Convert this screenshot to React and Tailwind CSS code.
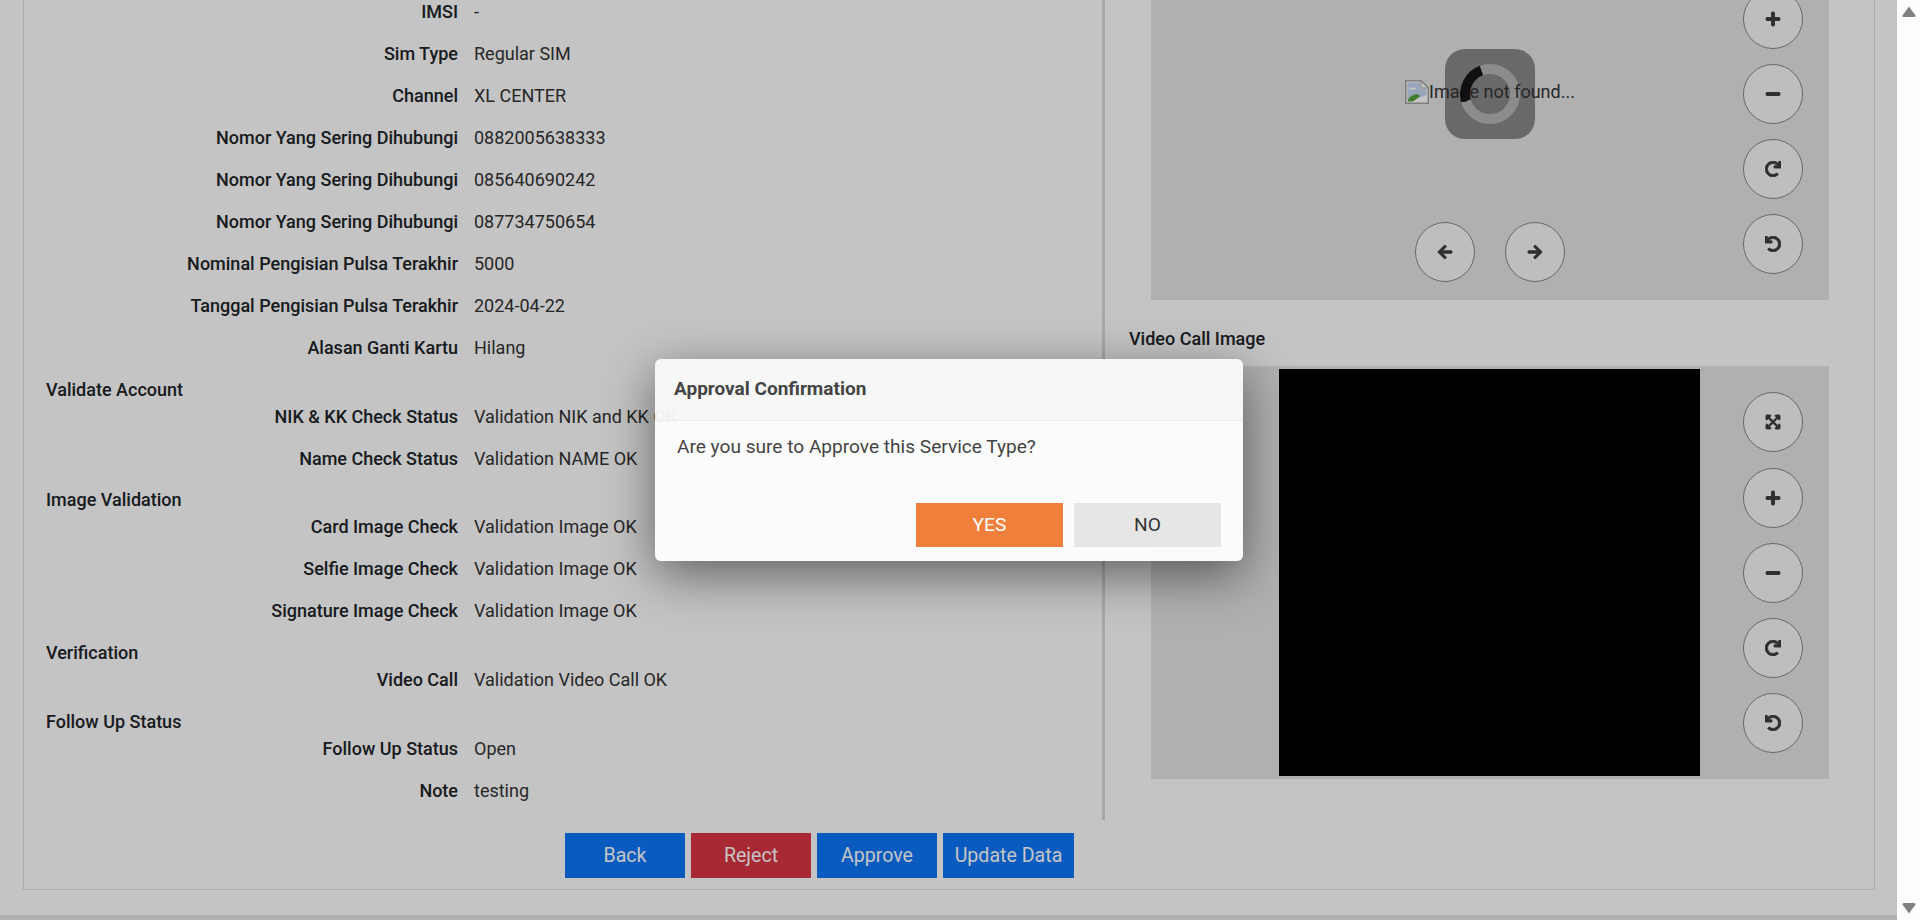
import { FaArrowLeft, FaArrowRight, FaPlus, FaMinus, FaRedo, FaUndo, FaExpandArrowsAlt } from 'react-icons/fa';

const topRows = [
  ['IMSI', '-'],
  ['Sim Type', 'Regular SIM'],
  ['Channel', 'XL CENTER'],
  ['Nomor Yang Sering Dihubungi', '0882005638333'],
  ['Nomor Yang Sering Dihubungi', '085640690242'],
  ['Nomor Yang Sering Dihubungi', '087734750654'],
  ['Nominal Pengisian Pulsa Terakhir', '5000'],
  ['Tanggal Pengisian Pulsa Terakhir', '2024-04-22'],
  ['Alasan Ganti Kartu', 'Hilang'],
];

const sections = [
  { title: 'Validate Account', rows: [['NIK & KK Check Status', 'Validation NIK and KK OK'], ['Name Check Status', 'Validation NAME OK']] },
  { title: 'Image Validation', rows: [['Card Image Check', 'Validation Image OK'], ['Selfie Image Check', 'Validation Image OK'], ['Signature Image Check', 'Validation Image OK']] },
  { title: 'Verification', rows: [['Video Call', 'Validation Video Call OK']] },
  { title: 'Follow Up Status', rows: [['Follow Up Status', 'Open'], ['Note', 'testing']] },
];

function Row({ label, value }) {
  return (
    <div className="flex h-6 mb-[18px] leading-6 whitespace-nowrap">
      <div className="w-[412px] text-right font-medium text-[#212529]">{label}</div>
      <div className="ml-4 text-[#333333]">{value}</div>
    </div>
  );
}

function RoundButton({ children }) {
  return (
    <button className="w-[60px] h-[60px] shrink-0 rounded-full bg-[#f7f7f7] border border-[#888888] flex items-center justify-center text-[#3c3c3c]">
      {children}
    </button>
  );
}

function BrokenImage() {
  return (
    <svg width="24" height="24" viewBox="0 0 24 24" className="shrink-0">
      <path d="M.75.75h15.5l7 7v15.5H.75z" fill="#ffffff" stroke="#a6a6a6" strokeWidth="1.5" />
      <path d="M2.5 2.5h12.5v6.5h6.5v6L2.5 21.5z" fill="#c5d6f2" />
      <path d="M3.5 9.5c1-2 3-2.5 4-1.5 1.5-1 3.5-.5 4 1.5z" fill="#ffffff" />
      <path d="M3 21.5v-2c3-4 7-6 10-5l2.5 1.5L8 21.5z" fill="#55a63f" />
      <path d="M16 1v7h7z" fill="#ffffff" stroke="#a6a6a6" strokeWidth="1" />
    </svg>
  );
}

const iconProps = { size: 16, stroke: 'currentColor', strokeWidth: 30 };

export default function App() {
  return (
    <div className="relative flex w-[1920px] h-[920px] overflow-hidden bg-[#fdfdfd] font-['Roboto',sans-serif] text-[18px]">
      <div className="relative w-[1897px] h-[920px] overflow-hidden bg-white">
        <div className="ml-[23px] mr-[22px] h-[890px] border-r border-b border-l border-[#dfdfdf]">
          <div className="flex h-[833px]">
            <div className="w-[1081px] h-[820px] border-r-[3px] border-[#dbdbdb]">
              <div className="pl-[22px]">
                <div>
                  {topRows.map((r, i) => <Row key={i} label={r[0]} value={r[1]} />)}
                </div>
                {sections.map((s) => (
                  <div key={s.title}>
                    <div className="h-6 leading-6 -mt-[0.5px] mb-[3.2px] font-medium text-[#212529]">{s.title}</div>
                    {s.rows.map((r, i) => <Row key={i} label={r[0]} value={r[1]} />)}
                  </div>
                ))}
              </div>
            </div>

            <div className="flex-1">
              <div className="relative ml-[46px] w-[678px] h-[300px] bg-[#e5e5e5]">
                {/* spinner card and ring sit under the text, the dark arc on top of it */}
                <div className="absolute left-[294px] top-[49px] w-[90px] h-[90px] rounded-[20px] bg-black/40 flex items-center justify-center">
                  <svg width="60" height="60" viewBox="0 0 60 60">
                    <circle cx="30" cy="30" r="25" fill="none" stroke="#dcdcdc" strokeOpacity="0.55" strokeWidth="10" />
                  </svg>
                </div>
                <div className="absolute left-[254px] top-[80px] flex items-center text-[#333333] leading-6">
                  <BrokenImage />
                  <span>Image not found...</span>
                </div>
                <svg width="60" height="60" viewBox="0 0 60 60" className="absolute left-[309px] top-[64px]">
                  <path d="M21.45 6.5A25 25 0 0 0 6 36.9" fill="none" stroke="#161616" strokeWidth="10" />
                </svg>
                <div className="absolute left-[592px] -top-[11px] flex flex-col gap-[15px]">
                  <RoundButton><FaPlus {...iconProps} /></RoundButton>
                  <RoundButton><FaMinus {...iconProps} /></RoundButton>
                  <RoundButton><FaRedo {...iconProps} /></RoundButton>
                  <RoundButton><FaUndo {...iconProps} /></RoundButton>
                </div>
                <div className="absolute left-[264px] top-[222px] flex gap-[30px]">
                  <RoundButton><FaArrowLeft {...iconProps} /></RoundButton>
                  <RoundButton><FaArrowRight {...iconProps} /></RoundButton>
                </div>
              </div>

              <div className="ml-[24px] mt-[27px] h-6 leading-6 font-medium text-[#212529]">Video Call Image</div>

              <div className="relative ml-[46px] mt-[15px] w-[678px] h-[413px] bg-[#e5e5e5] pl-[128px] pt-[3px]">
                <div className="w-[421px] h-[407px] bg-black" />
                <div className="absolute left-[592px] top-[26px] flex flex-col gap-[15px]">
                  <div className="mb-px"><RoundButton><FaExpandArrowsAlt {...iconProps} /></RoundButton></div>
                  <RoundButton><FaPlus {...iconProps} /></RoundButton>
                  <RoundButton><FaMinus {...iconProps} /></RoundButton>
                  <RoundButton><FaRedo {...iconProps} /></RoundButton>
                  <RoundButton><FaUndo {...iconProps} /></RoundButton>
                </div>
              </div>
            </div>
          </div>

          <div className="flex gap-[6px] ml-[541px] text-white text-[19.6px]">
            <button className="w-[120px] h-[45px] bg-[#0d77f9]">Back</button>
            <button className="w-[120px] h-[45px] bg-[#db3443]">Reject</button>
            <button className="w-[120px] h-[45px] bg-[#0d77f9]">Approve</button>
            <button className="w-[131px] h-[45px] bg-[#0d77f9]">Update Data</button>
          </div>
        </div>
        <div className="mt-[25px] h-[5px] bg-[#e5e5e5]" />

        {/* modal backdrop and dialog */}
        <div className="absolute inset-0 bg-black/[0.23]" />
        <div className="absolute left-[655px] top-[359px] w-[588px] h-[202px] rounded-[6px] bg-white/95 shadow-[0_14px_50px_rgba(0,0,0,0.5)] overflow-hidden">
          <div className="h-[62px] bg-black/[0.02] border-b border-[#ececec] pl-[19px] pt-[17px] leading-[26px] text-[19px] font-bold text-[#444444]">Approval Confirmation</div>
          <div className="pl-[22px] pt-[13px] h-[82px] leading-[26px] text-[19.1px] text-[#444444]">Are you sure to Approve this Service Type?</div>
          <div className="flex justify-end gap-[11px] pr-[22px] text-[19.2px]">
            <button className="w-[147px] h-[44px] bg-[#f07f3c] text-white">YES</button>
            <button className="w-[147px] h-[44px] bg-[#e6e6e6] text-[#333333]">NO</button>
          </div>
        </div>
      </div>

      <div className="w-[23px] h-[920px] flex flex-col justify-between items-center pt-[6px] pb-[6px] bg-[#fdfdfd]">
        <svg width="14" height="11" viewBox="0 0 14 11"><path d="M7 0.5L13.5 9.5Q14 11 12 11H2Q0 11 0.5 9.5Z" fill="#7f7f7f" /></svg>
        <svg width="14" height="11" viewBox="0 0 14 11"><path d="M7 10.5L13.5 1.5Q14 0 12 0H2Q0 0 0.5 1.5Z" fill="#7f7f7f" /></svg>
      </div>
    </div>
  );
}
